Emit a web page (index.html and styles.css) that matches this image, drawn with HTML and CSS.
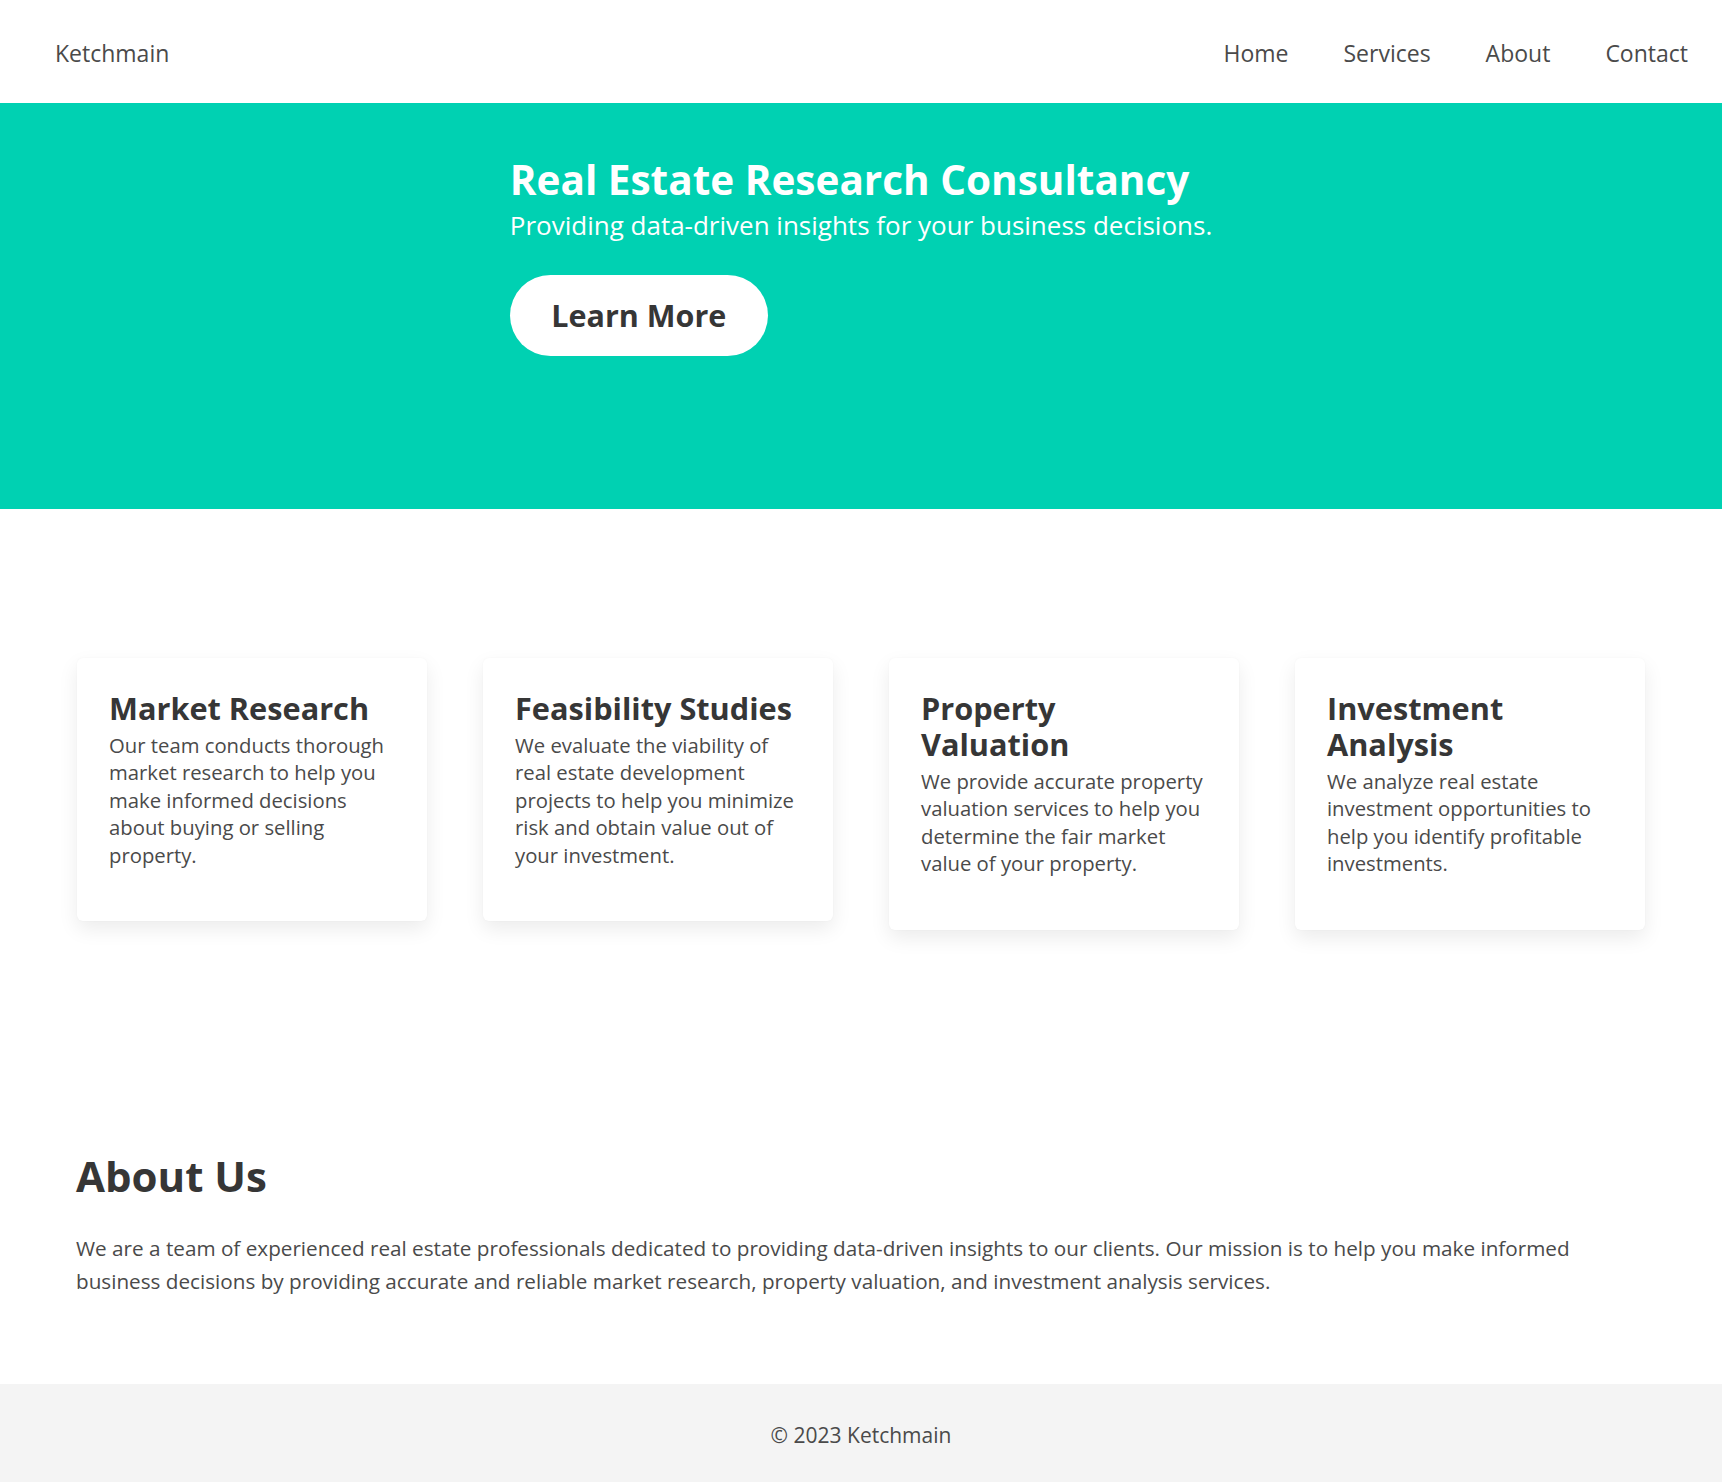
FILE: index.html
```html
<!DOCTYPE html>
<html lang="en">
<head>
<meta charset="utf-8">
<title>Ketchmain - Real Estate Research Consultancy</title>
<link rel="stylesheet" href="styles.css">
</head>
<body>
<header class="site-header">
  <a class="brand" href="#">Ketchmain</a>
  <nav class="nav">
    <a href="#">Home</a>
    <a href="#">Services</a>
    <a href="#">About</a>
    <a href="#">Contact</a>
  </nav>
</header>

<section class="hero">
  <div class="hero-inner">
    <h1 class="hero-title">Real Estate Research Consultancy</h1>
    <p class="hero-subtitle">Providing data-driven insights for your business decisions.</p>
    <a class="hero-button" href="#">Learn More</a>
  </div>
</section>

<section class="services">
  <div class="cards">
    <div class="card">
      <h3 class="card-title">Market Research</h3>
      <p class="card-text">Our team conducts thorough market research to help you make informed decisions about buying or selling property.</p>
    </div>
    <div class="card">
      <h3 class="card-title">Feasibility Studies</h3>
      <p class="card-text">We evaluate the viability of real estate development projects to help you minimize risk and obtain value out of your investment.</p>
    </div>
    <div class="card">
      <h3 class="card-title">Property Valuation</h3>
      <p class="card-text">We provide accurate property valuation services to help you determine the fair market value of your property.</p>
    </div>
    <div class="card">
      <h3 class="card-title">Investment Analysis</h3>
      <p class="card-text">We analyze real estate investment opportunities to help you identify profitable investments.</p>
    </div>
  </div>
</section>

<section class="about">
  <h2 class="about-title">About Us</h2>
  <p class="about-text">We are a team of experienced real estate professionals dedicated to providing data-driven insights to our clients. Our mission is to help you make informed business decisions by providing accurate and reliable market research, property valuation, and investment analysis services.</p>
</section>

<footer class="footer">
  <p>&copy; 2023 Ketchmain</p>
</footer>
</body>
</html>
```

FILE: styles.css
```css
* { box-sizing: border-box; }

body {
  margin: 0;
  font-family: "Open Sans", "Noto Sans", sans-serif;
  color: #4a4a4a;
  background: #ffffff;
}

a { text-decoration: none; color: inherit; }

.site-header {
  height: 103px;
  display: flex;
  align-items: center;
  justify-content: space-between;
  padding: 2px 34px 0 55px;
}

.brand {
  font-size: 23px;
  color: #4a4a4a;
}

.nav {
  display: flex;
  gap: 55px;
  font-size: 23px;
  color: #4a4a4a;
}

.hero {
  background: #00d1b2;
  height: 406px;
  display: flex;
  justify-content: center;
  padding-top: 52px;
}

.hero-inner {
  width: fit-content;
}

.hero-title {
  margin: 0;
  color: #ffffff;
  font-size: 40.5px;
  font-weight: 700;
  line-height: 1.25;
}

.hero-subtitle {
  margin: 0;
  color: #ffffff;
  font-size: 26px;
  line-height: 1.5;
  font-weight: 400;
}

.hero-button {
  display: inline-flex;
  align-items: center;
  justify-content: center;
  margin-top: 30px;
  width: 258px;
  height: 81px;
  border-radius: 41px;
  background: #ffffff;
  color: #363636;
  font-size: 30.5px;
  font-weight: 700;
}

.services {
  padding: 149px 0 0;
}

.cards {
  width: 1568px;
  margin: 0 auto;
  display: grid;
  grid-template-columns: repeat(4, 1fr);
  gap: 56px;
  align-items: start;
}

.card {
  background: #ffffff;
  border-radius: 6px;
  box-shadow: 0 8px 20px rgba(10, 10, 10, 0.08), 0 0 2px rgba(10, 10, 10, 0.04);
  padding: 32px 28px 52px 32px;
}

.card-title {
  margin: 0;
  color: #363636;
  font-size: 30.7px;
  font-weight: 700;
  line-height: 36px;
}

.card-text {
  margin: 6px 0 0;
  font-size: 20.3px;
  line-height: 27.4px;
}

.about {
  width: 1570px;
  margin: 0 auto;
  padding: 221px 0 86px;
}

.about-title {
  margin: 0;
  color: #363636;
  font-size: 42px;
  font-weight: 700;
  line-height: 1.2;
}

.about-text {
  max-width: 1530px;
  margin: 31px 0 0;
  font-size: 20.7px;
  line-height: 33px;
}

.footer {
  background: #f4f4f4;
  height: 101px;
  display: flex;
  align-items: center;
  justify-content: center;
}

.footer p {
  margin: 0;
  font-size: 21px;
  color: #4a4a4a;
}
```
